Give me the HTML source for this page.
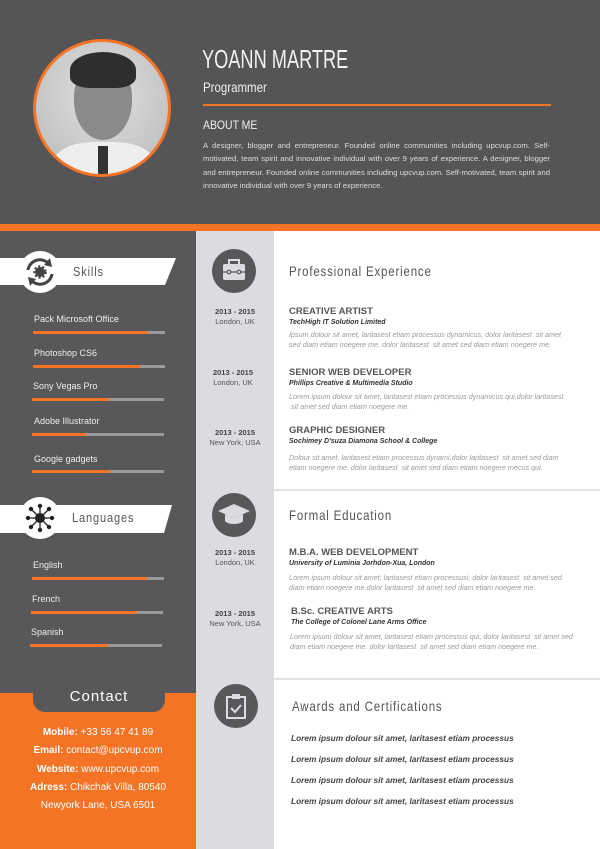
<!DOCTYPE html>
<html><head><meta charset="utf-8"><style>
*{margin:0;padding:0;box-sizing:border-box}
body{width:600px;height:849px;position:relative;overflow:hidden;background:#fff;font-family:"Liberation Sans",sans-serif}
.a{position:absolute;white-space:nowrap}
.dk{background:#58585a}
.bar{position:absolute;height:3px;background:#9a9a9c}
.bar i{display:block;height:3px;background:#f47325}
.lbl{position:absolute;color:#eee;font-size:9px}
.ic{position:absolute;width:44px;height:44px;border-radius:50%;background:#58585a}
.dt{position:absolute;width:78px;left:196px;text-align:center;font-size:7.5px;color:#555;line-height:10px}
.dt b{color:#444}
.h2{position:absolute;left:289px;font-size:14px;color:#555;letter-spacing:1px;transform:scaleX(0.82);transform-origin:0 0}
.t{position:absolute;left:289px;font-size:9.5px;font-weight:bold;color:#555}
.co{position:absolute;left:289px;font-size:7px;font-weight:bold;font-style:italic;color:#333}
.ds{position:absolute;left:289px;width:285px;font-size:7.2px;font-style:italic;color:#9a9a9a;line-height:10px}
.aw{position:absolute;left:291px;font-size:8.3px;font-weight:bold;font-style:italic;color:#444}
.ct{position:absolute;left:0;width:196px;text-align:center;color:#fff;font-size:10px}
</style></head><body>
<div class="a dk" style="left:0;top:0;width:600px;height:224px;background:#555457"></div>
<div class="a" style="left:0;top:224px;width:600px;height:7px;background:#f47325"></div>
<div class="a" style="left:33px;top:39px;width:138px;height:138px;border-radius:50%;border:3px solid #f47325;background:radial-gradient(circle at 50% 40%,#e0e0e0,#b8b8b8);overflow:hidden">
<div class="a" style="left:38px;top:20px;width:58px;height:78px;border-radius:45% 45% 50% 50%;background:#8a8a8a"></div>
<div class="a" style="left:34px;top:10px;width:66px;height:36px;border-radius:50% 50% 30% 30%;background:#2e2e2e"></div>
<div class="a" style="left:18px;top:100px;width:100px;height:50px;border-radius:40% 40% 0 0;background:#eee"></div>
<div class="a" style="left:62px;top:104px;width:10px;height:30px;background:#333"></div>
</div>
<div class="a" style="left:202px;top:44px;font-size:26px;color:#f2f2f2;transform:scaleX(0.7);transform-origin:0 0">YOANN MARTRE</div>
<div class="a" style="left:203px;top:79px;font-size:14px;color:#eee;transform:scaleX(0.82);transform-origin:0 0">Programmer</div>
<div class="a" style="left:203px;top:104px;width:348px;height:2px;background:#f47325"></div>
<div class="a" style="left:203px;top:118px;font-size:12px;color:#f0f0f0;transform:scaleX(0.87);transform-origin:0 0">ABOUT ME</div>
<div class="a" style="left:203px;top:139px;width:347px;white-space:normal;text-align:justify;font-size:7.7px;line-height:13.3px;color:#ddd">A designer, blogger and entrepreneur. Founded online communities including upcvup.com. Self-motivated, team spirit and innovative individual with over 9 years of experience. A designer, blogger and entrepreneur. Founded online communities including upcvup.com. Self-motivated, team spirit and innovative individual with over 9 years of experience.</div>

<div class="a dk" style="left:0;top:231px;width:196px;height:463px"></div>
<div class="a" style="left:0;top:693px;width:196px;height:156px;background:#f47325"></div>
<div class="a" style="left:196px;top:231px;width:78px;height:618px;background:#dcdbe0"></div>

<svg class="a" style="left:0;top:250px" width="180" height="45"><polygon points="0,8 176,8 165,35 0,35" fill="#fff"/><circle cx="40" cy="22" r="21" fill="#fff"/>
<path d="M28 20a12 12 0 0 1 21-6" stroke="#444" stroke-width="3" fill="none"/><path d="M52 24a12 12 0 0 1-21 6" stroke="#444" stroke-width="3" fill="none"/><polygon points="50,8 52,17 44,15" fill="#444"/><polygon points="30,36 28,27 36,29" fill="#444"/><circle cx="40" cy="22" r="5" fill="#444"/><circle cx="40" cy="22" r="5.5" fill="none" stroke="#444" stroke-width="2.5" stroke-dasharray="2 2"/></svg>
<div class="a" style="left:73px;top:264px;font-size:13px;color:#555;letter-spacing:1px;transform:scaleX(0.85);transform-origin:0 0">Skills</div>

<div class="lbl" style="left:34px;top:314px">Pack Microsoft Office</div><div class="bar" style="left:33px;top:331px;width:132px"><i style="width:87%"></i></div>
<div class="lbl" style="left:34px;top:348px">Photoshop CS6</div><div class="bar" style="left:33px;top:365px;width:132px"><i style="width:81%"></i></div>
<div class="lbl" style="left:33px;top:381px">Sony Vegas Pro</div><div class="bar" style="left:32px;top:398px;width:132px"><i style="width:58%"></i></div>
<div class="lbl" style="left:34px;top:416px">Adobe Illustrator</div><div class="bar" style="left:32px;top:433px;width:132px"><i style="width:41%"></i></div>
<div class="lbl" style="left:34px;top:454px">Google gadgets</div><div class="bar" style="left:32px;top:470px;width:132px"><i style="width:59%"></i></div>

<svg class="a" style="left:0;top:497px" width="180" height="45"><polygon points="0,8 172,8 164,36 0,36" fill="#fff"/><circle cx="40" cy="21" r="21" fill="#fff"/>
<g stroke="#222" stroke-width="1.3"><line x1="40" y1="9" x2="40" y2="33"/><line x1="28" y1="21" x2="52" y2="21"/><line x1="31" y1="12" x2="49" y2="30"/><line x1="49" y1="12" x2="31" y2="30"/></g><circle cx="40" cy="21" r="5" fill="#222"/>
<g fill="#222"><circle cx="40" cy="9" r="2.2"/><circle cx="40" cy="33" r="2.2"/><circle cx="28" cy="21" r="2.2"/><circle cx="52" cy="21" r="2.2"/><circle cx="31" cy="12" r="2.2"/><circle cx="49" cy="30" r="2.2"/><circle cx="49" cy="12" r="2.2"/><circle cx="31" cy="30" r="2.2"/></g></svg>
<div class="a" style="left:72px;top:510px;font-size:13px;color:#555;letter-spacing:1px;transform:scaleX(0.85);transform-origin:0 0">Languages</div>

<div class="lbl" style="left:33px;top:560px">English</div><div class="bar" style="left:32px;top:577px;width:132px"><i style="width:87%"></i></div>
<div class="lbl" style="left:32px;top:594px">French</div><div class="bar" style="left:31px;top:611px;width:132px"><i style="width:80%"></i></div>
<div class="lbl" style="left:31px;top:627px">Spanish</div><div class="bar" style="left:30px;top:644px;width:132px"><i style="width:59%"></i></div>

<div class="a dk" style="left:33px;top:690px;width:132px;height:22px;border-radius:0 0 12px 12px"></div>
<div class="a" style="left:33px;top:688px;width:132px;text-align:center;font-size:15px;color:#fff;letter-spacing:1px">Contact</div>
<div class="ct" style="top:727px"><b>Mobile:</b> +33 56 47 41 89</div>
<div class="ct" style="top:745px"><b>Email:</b> contact@upcvup.com</div>
<div class="ct" style="top:764px"><b>Website:</b> www.upcvup.com</div>
<div class="ct" style="top:782px"><b>Adress:</b> Chikchak Villa, 80540</div>
<div class="ct" style="top:800px">Newyork Lane, USA 6501</div>

<div class="ic" style="left:212px;top:249px"><svg width="44" height="44"><rect x="11" y="15" width="22" height="16" rx="1.5" fill="#dcdbe0"/><rect x="17" y="11" width="10" height="5" fill="none" stroke="#dcdbe0" stroke-width="2"/><g stroke="#58585a" stroke-width="1.2" fill="none"><line x1="11" y1="23" x2="33" y2="23"/><circle cx="17" cy="23" r="1.8" fill="#dcdbe0"/><circle cx="27" cy="23" r="1.8" fill="#dcdbe0"/></g></svg></div>
<div class="ic" style="left:212px;top:493px"><svg width="44" height="44"><polygon points="22,11 38,18 22,25 6,18" fill="#dcdbe0"/><path d="M13 21v7c3 4 15 4 18 0v-7l-9 4z" fill="#dcdbe0"/></svg></div>
<div class="ic" style="left:214px;top:684px"><svg width="44" height="44"><rect x="13" y="13" width="18" height="21" fill="none" stroke="#dcdbe0" stroke-width="2"/><rect x="18" y="10" width="8" height="5" fill="#dcdbe0"/><path d="M17 24l4 4 6-7" stroke="#dcdbe0" stroke-width="2" fill="none"/></svg></div>

<div class="dt" style="top:307px"><b>2013 - 2015</b><br>London, UK</div>
<div class="dt" style="top:368px;left:194px"><b>2013 - 2015</b><br>London, UK</div>
<div class="dt" style="top:428px;left:196px"><b>2013 - 2015</b><br>New York, USA</div>
<div class="dt" style="top:548px"><b>2013 - 2015</b><br>London, UK</div>
<div class="dt" style="top:609px"><b>2013 - 2015</b><br>New York, USA</div>

<div class="h2" style="top:263px">Professional Experience</div>
<div class="t" style="top:306px">CREATIVE ARTIST</div>
<div class="co" style="top:319px">TechHigh IT Solution Limited</div>
<div class="ds" style="top:330px">Ipsum dolour sit amet, laritasest etiam processus dynamicus, dolor laritasest &nbsp;sit amet sed diam etiam noegere me. dolor laritasest &nbsp;sit amet sed diam etiam noegere me.</div>
<div class="t" style="top:367px">SENIOR WEB DEVELOPER</div>
<div class="co" style="top:380px">Phillips Creative &amp; Multimedia Studio</div>
<div class="ds" style="top:392px">Lorem ipsum dolour sit amet, laritasest etiam processus dynamicus qui,dolor laritasest &nbsp;sit amet sed diam etiam noegere me.</div>
<div class="t" style="top:425px">GRAPHIC DESIGNER</div>
<div class="co" style="top:438px">Sochimey D'suza Diamona School &amp; College</div>
<div class="ds" style="top:453px">Dolour sit amet, laritasest etiam processus dynami,dolor laritasest &nbsp;sit amet sed diam etiam noegere me. dolor laritasest &nbsp;sit amet sed diam etiam noegere mecus qui.</div>

<div class="a" style="left:274px;top:489px;width:326px;height:2px;background:#e2e2e4"></div>
<div class="h2" style="top:507px">Formal Education</div>
<div class="t" style="top:547px">M.B.A. WEB DEVELOPMENT</div>
<div class="co" style="top:560px">University of Luminia Jorhdon-Xua, London</div>
<div class="ds" style="top:573px">Lorem ipsum dolour sit amet, laritasest etiam processusi, dolor laritasest &nbsp;sit amet sed diam etiam noegere me.dolor laritasest &nbsp;sit amet sed diam etiam noegere me.</div>
<div class="t" style="top:606px;left:291px">B.Sc. CREATIVE ARTS</div>
<div class="co" style="top:619px;left:291px">The College of Colonel Lane Arms Office</div>
<div class="ds" style="top:632px;left:290px">Lorem ipsum dolour sit amet, laritasest etiam processus qui, dolor laritasest &nbsp;sit amet sed diam etiam noegere me. dolor laritasest &nbsp;sit amet sed diam etiam noegere me.</div>

<div class="a" style="left:274px;top:678px;width:326px;height:2px;background:#e2e2e4"></div>
<div class="h2" style="top:698px;left:292px">Awards and Certifications</div>
<div class="aw" style="top:733px">Lorem ipsum dolour sit amet, laritasest etiam processus</div>
<div class="aw" style="top:754px">Lorem ipsum dolour sit amet, laritasest etiam processus</div>
<div class="aw" style="top:775px">Lorem ipsum dolour sit amet, laritasest etiam processus</div>
<div class="aw" style="top:796px">Lorem ipsum dolour sit amet, laritasest etiam processus</div>
</body></html>
